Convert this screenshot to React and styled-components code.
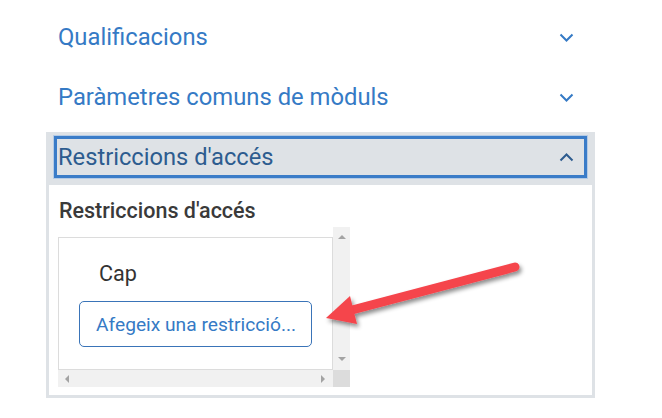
import React from "react";
import styled, { createGlobalStyle } from "styled-components";

const GlobalStyle = createGlobalStyle`
  html, body {
    margin: 0;
    padding: 0;
    background: #fff;
  }
  body {
    font-family: Roboto, "Liberation Sans", sans-serif;
  }
`;

const Page = styled.div`
  position: relative;
  width: 662px;
  height: 418px;
  padding: 7px 0 0 46px;
  box-sizing: border-box;
  overflow: hidden;
`;

const Accordion = styled.div`
  width: 549px;
  display: flex;
  flex-direction: column;
`;

const SectionRow = styled.div`
  height: 60px;
  display: flex;
  align-items: center;
  justify-content: space-between;
  padding: 0 21px 0 12px;
  color: #357ac5;
  font-size: 23.8px;
`;

const ActiveSection = styled.div`
  margin-top: 5px;
  border: 3px solid #dee2e6;
  display: flex;
  flex-direction: column;
`;

const SectionHeader = styled.div`
  background: #dee2e6;
  padding: 1px 5px 7px 5px;
`;

const ToggleButton = styled.div`
  height: 42px;
  box-sizing: border-box;
  border: 3px solid #3a7cc8;
  box-shadow: 0 0 0 1px #b4cbe6;
  display: flex;
  align-items: center;
  justify-content: space-between;
  padding: 0 10px 0 1px;
  color: #2d5c8f;
  font-size: 23.7px;
`;

const SectionBody = styled.div`
  background: #fff;
  padding: 14px 0 8px 9px;
`;

const Label = styled.div`
  font-size: 21.5px;
  font-weight: 500;
  line-height: 24px;
  color: #3a3a3a;
  margin: 0 0 4px 1px;
`;

const ScrollFrame = styled.div`
  display: grid;
  grid-template-columns: 275px 17px;
  grid-template-rows: 143px 17px;
  width: 292px;
`;

const ScrollContent = styled.div`
  padding-top: 10px;
  background: #fff;
  box-sizing: border-box;
`;

const RestrictionBox = styled.div`
  height: 100%;
  box-sizing: border-box;
  border: 1px solid #dcdcdc;
  padding: 24px 0 0 20px;
  display: flex;
  flex-direction: column;
  align-items: flex-start;
`;

const NoneText = styled.div`
  font-size: 21.6px;
  line-height: 24px;
  color: #333;
  margin-left: 20px;
`;

const AddButton = styled.button`
  margin-top: 15px;
  width: 233px;
  height: 46px;
  box-sizing: border-box;
  border: 1px solid #3a74b8;
  border-radius: 5px;
  background: #fff;
  color: #357ac5;
  font-family: inherit;
  font-size: 19.2px;
  text-align: left;
  padding: 0 0 0 16px;
  white-space: nowrap;
  overflow: hidden;
`;

const VScroll = styled.div`
  background: #f1f1f1;
  display: flex;
  flex-direction: column;
  justify-content: space-between;
  align-items: center;
  padding: 8px 0 9px;
`;

const HScroll = styled.div`
  background: #f1f1f1;
  display: flex;
  justify-content: space-between;
  align-items: center;
  padding: 0 8px 0 7px;
`;

const Corner = styled.div`
  background: #dcdcdc;
`;

const Tri = styled.span`
  width: 0;
  height: 0;
  border: 4px solid transparent;
  ${({ dir }) => dir === "up" && "border-bottom-color: #a3a3a3; border-top-width: 0;"}
  ${({ dir }) => dir === "down" && "border-top-color: #a3a3a3; border-bottom-width: 0;"}
  ${({ dir }) => dir === "left" && "border-right-color: #a3a3a3; border-left-width: 0;"}
  ${({ dir }) => dir === "right" && "border-left-color: #a3a3a3; border-right-width: 0;"}
`;

const Overlay = styled.svg`
  position: absolute;
  left: 0;
  top: 0;
  pointer-events: none;
`;

const Chevron = ({ up, color }) => (
  <svg width="15" height="9" viewBox="0 0 15 9">
    <path
      d={up ? "M1.5 7.5 L7.5 1.5 L13.5 7.5" : "M1.5 1.5 L7.5 7.5 L13.5 1.5"}
      fill="none"
      stroke={color}
      strokeWidth="2"
    />
  </svg>
);

export default function App() {
  return (
    <Page>
      <GlobalStyle />
      <Accordion>
        <SectionRow>
          <span>Qualificacions</span>
          <Chevron color="#357ac5" />
        </SectionRow>
        <SectionRow>
          <span>Paràmetres comuns de mòduls</span>
          <Chevron color="#357ac5" />
        </SectionRow>
        <ActiveSection>
          <SectionHeader>
            <ToggleButton>
              <span>Restriccions d'accés</span>
              <Chevron up color="#2d5c8f" />
            </ToggleButton>
          </SectionHeader>
          <SectionBody>
            <Label>Restriccions d'accés</Label>
            <ScrollFrame>
              <ScrollContent>
                <RestrictionBox>
                  <NoneText>Cap</NoneText>
                  <AddButton>Afegeix una restricció...</AddButton>
                </RestrictionBox>
              </ScrollContent>
              <VScroll>
                <Tri dir="up" />
                <Tri dir="down" />
              </VScroll>
              <HScroll>
                <Tri dir="left" />
                <Tri dir="right" />
              </HScroll>
              <Corner />
            </ScrollFrame>
          </SectionBody>
        </ActiveSection>
      </Accordion>
      <Overlay width="662" height="418" viewBox="0 0 662 418">
        <defs>
          <filter id="arrowShadow" x="-20%" y="-50%" width="140%" height="200%">
            <feDropShadow dx="2" dy="3" stdDeviation="2" floodColor="#000" floodOpacity="0.45" />
          </filter>
        </defs>
        <g filter="url(#arrowShadow)" fill="#f5444c">
          <line x1="515" y1="267" x2="352" y2="310" stroke="#f5444c" strokeWidth="9" strokeLinecap="round" />
          <polygon points="326,318 350,296 357,324" />
        </g>
      </Overlay>
    </Page>
  );
}
